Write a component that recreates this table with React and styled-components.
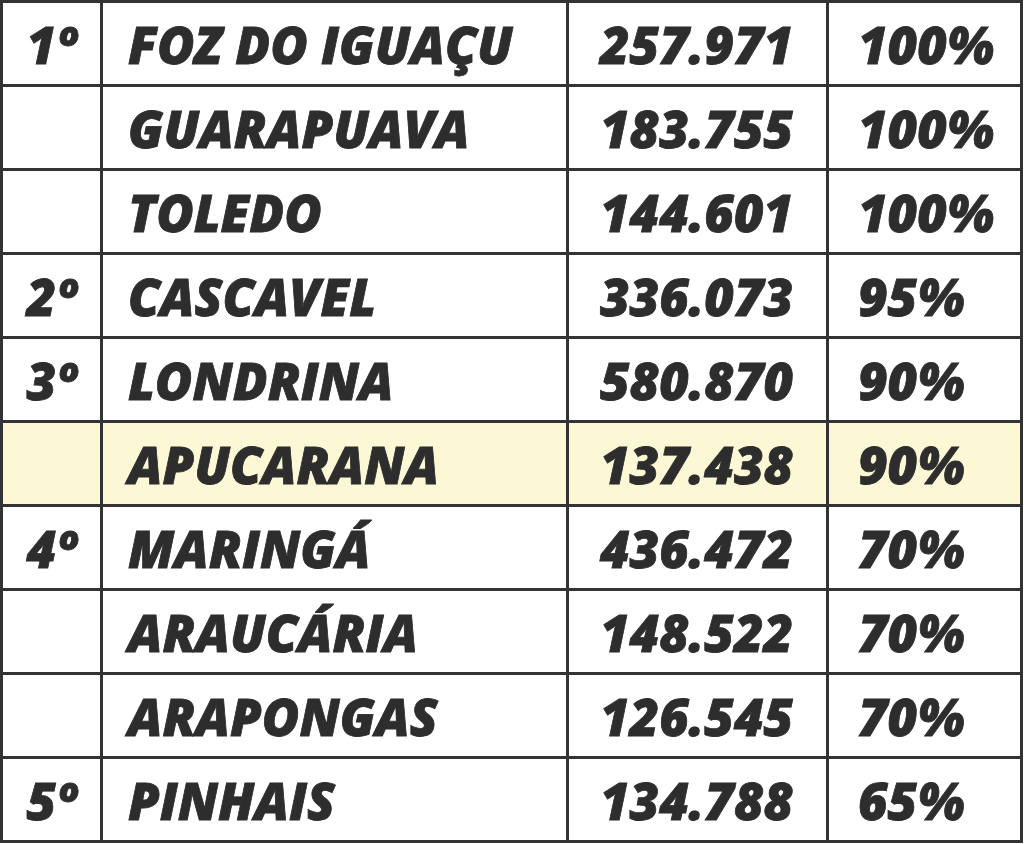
import styled, { createGlobalStyle } from "styled-components";

const rows = [
  { rank: "1º", city: "FOZ DO IGUAÇU", pop: "257.971", pct: "100%" },
  { rank: "", city: "GUARAPUAVA", pop: "183.755", pct: "100%" },
  { rank: "", city: "TOLEDO", pop: "144.601", pct: "100%" },
  { rank: "2º", city: "CASCAVEL", pop: "336.073", pct: "95%" },
  { rank: "3º", city: "LONDRINA", pop: "580.870", pct: "90%" },
  { rank: "", city: "APUCARANA", pop: "137.438", pct: "90%", highlight: true },
  { rank: "4º", city: "MARINGÁ", pop: "436.472", pct: "70%" },
  { rank: "", city: "ARAUCÁRIA", pop: "148.522", pct: "70%" },
  { rank: "", city: "ARAPONGAS", pop: "126.545", pct: "70%" },
  { rank: "5º", city: "PINHAIS", pop: "134.788", pct: "65%" },
];

function App() {
  return (
    <>
      <GlobalStyle />
      <Table>
        {rows.map((r) => (
          <Row key={r.city}>
            <Cell $hl={r.highlight} $center>
              {r.rank}
            </Cell>
            <Cell $hl={r.highlight}>{r.city}</Cell>
            <Cell $hl={r.highlight} $pad="31px">
              {r.pop}
            </Cell>
            <Cell $hl={r.highlight} $pad="29px">
              {r.pct}
            </Cell>
          </Row>
        ))}
      </Table>
    </>
  );
}

export default App;

const GlobalStyle = createGlobalStyle`
  body {
    margin: 0;
    background: #ffffff;
    font-family: "Open Sans", "Liberation Sans", sans-serif;
  }
`;

const Table = styled.div`
  display: grid;
  grid-template-columns: 97px 463px 257px 191px;
  grid-auto-rows: 81px;
  gap: 3px;
  padding: 3px;
  width: 1023px;
  box-sizing: border-box;
  background: #333333;
`;

const Row = styled.div`
  display: contents;
`;

const Cell = styled.div`
  display: flex;
  align-items: center;
  justify-content: ${(p) => (p.$center ? "center" : "flex-start")};
  padding-left: ${(p) => (p.$center ? "0" : p.$pad || "25px")};
  padding-top: 1px;
  background: ${(p) => (p.$hl ? "#fcf8d6" : "#ffffff")};
  color: #2d2d2d;
  font-family: "Open Sans", "Liberation Sans", sans-serif;
  font-size: 51px;
  font-weight: 800;
  font-style: italic;
  letter-spacing: 0px;
  -webkit-text-stroke: 0.8px #2d2d2d;
  white-space: nowrap;
`;
